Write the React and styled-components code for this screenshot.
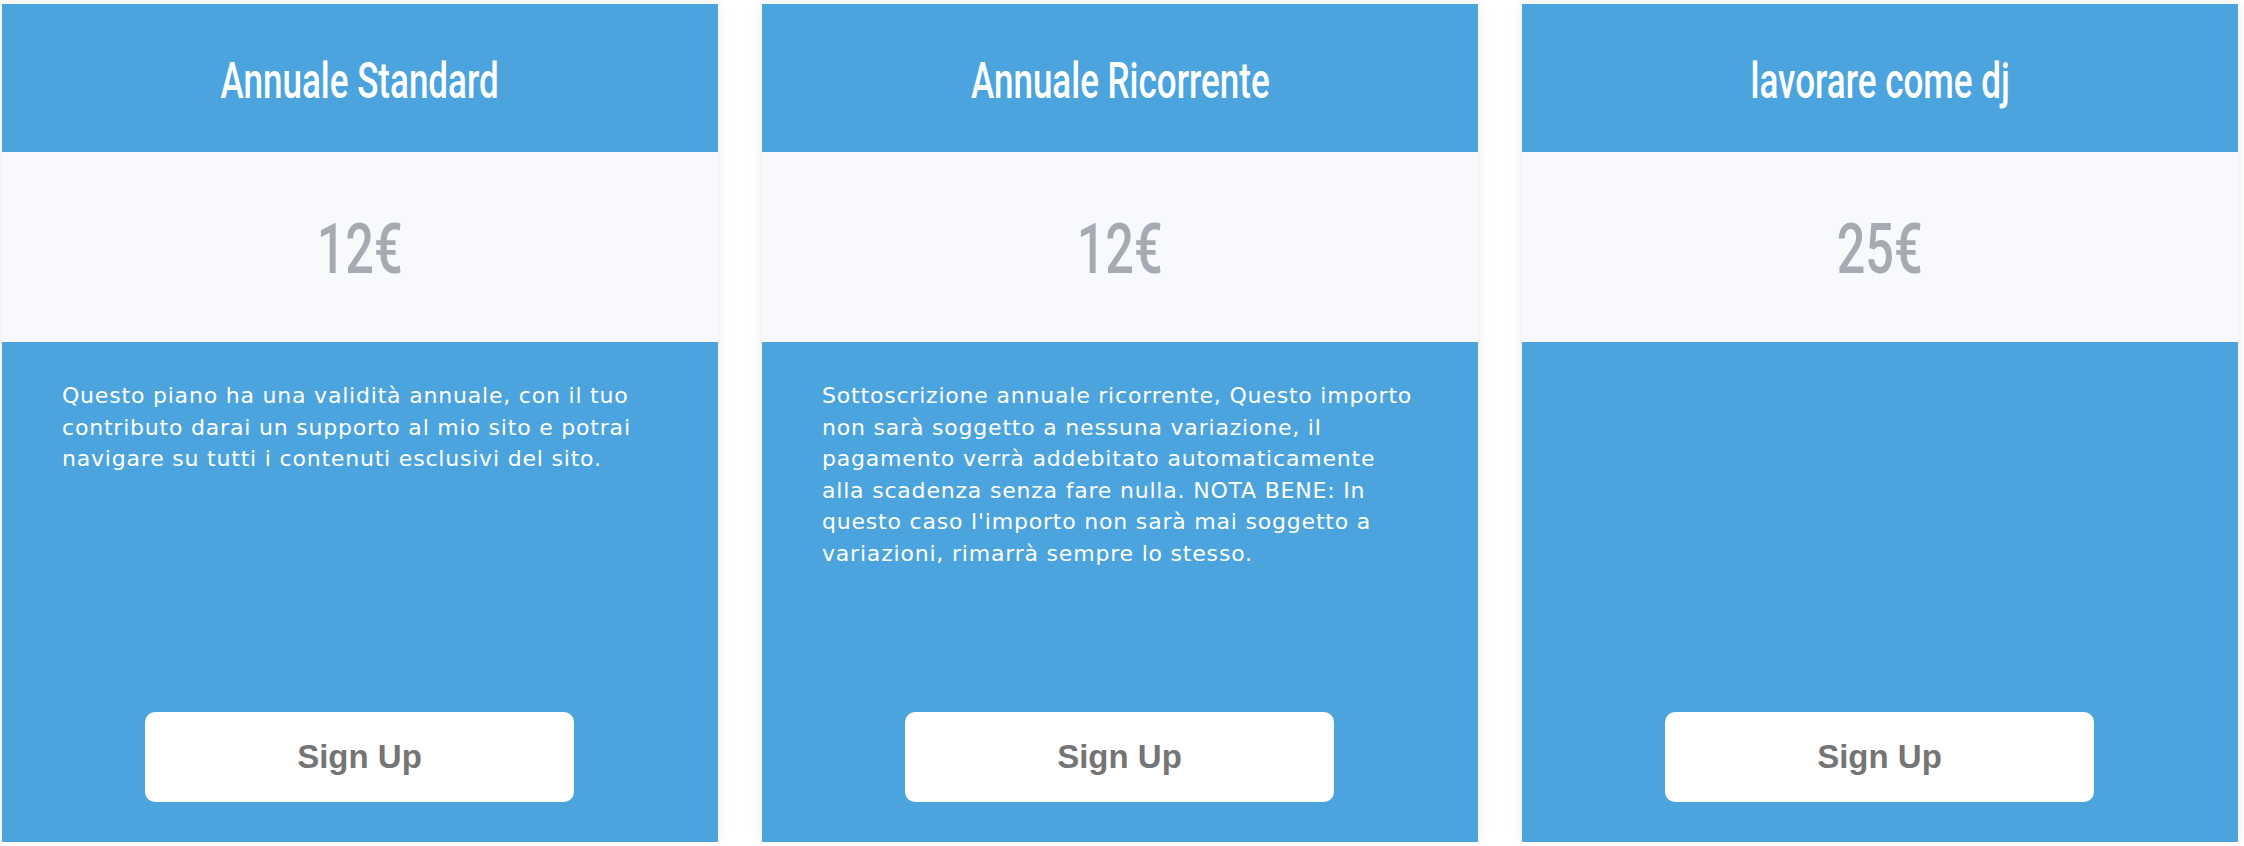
import React from "react";
import styled, { createGlobalStyle } from "styled-components";

const GlobalStyle = createGlobalStyle`
  html, body {
    margin: 0;
    padding: 0;
    background: #ffffff;
  }
  body {
    font-family: "DejaVu Sans", sans-serif;
  }
`;

const BLUE = "#4ca4de";

const Plans = styled.div`
  display: flex;
  gap: 44px;
  padding: 4px 0 0 2px;
`;

const Card = styled.article`
  width: 716px;
  height: 838px;
  display: flex;
  flex-direction: column;
  background: ${BLUE};
  box-shadow: 0 0 12px rgba(0, 0, 0, 0.09);
`;

const Header = styled.header`
  height: 148px;
  box-sizing: border-box;
  padding-top: 6px;
  display: flex;
  align-items: center;
  justify-content: center;
`;

/* narrow display face: Roboto squeezed horizontally */
const Title = styled.h2`
  display: inline-block;
  margin: 0;
  color: #ffffff;
  font-family: Roboto, "Liberation Sans", sans-serif;
  font-weight: 500;
  font-size: 50px;
  line-height: 1;
  white-space: nowrap;
  transform: scaleX(0.7);
  transform-origin: center;
`;

const PriceBand = styled.div`
  height: 190px;
  box-sizing: border-box;
  padding-top: 4px;
  display: flex;
  align-items: center;
  justify-content: center;
  background: #f7f9fc;
`;

const Price = styled.span`
  display: inline-block;
  color: #a5aab3;
  font-family: Roboto, "Liberation Sans", sans-serif;
  font-weight: 500;
  font-size: 70px;
  line-height: 1;
  transform: scaleX(0.72);
  transform-origin: center;
`;

const Body = styled.div`
  flex: 1;
  display: flex;
  flex-direction: column;
  padding: 38px 58px 40px 60px;
`;

const Description = styled.p`
  margin: 0;
  color: #ffffff;
  font-family: "DejaVu Sans", sans-serif;
  font-size: 22px;
  letter-spacing: 0.8px;
  line-height: 31.5px;
`;

const SignUp = styled.button`
  margin: auto 0 0 83px;
  width: 429px;
  height: 90px;
  border: none;
  border-radius: 10px;
  background: #ffffff;
  color: #757575;
  font-family: "Liberation Sans", Arial, sans-serif;
  font-weight: 700;
  font-size: 33px;
  cursor: pointer;
`;

const plans = [
  {
    title: "Annuale Standard",
    price: "12€",
    text: "Questo piano ha una validità annuale, con il tuo contributo darai un supporto al mio sito e potrai navigare su tutti i contenuti esclusivi del sito.",
  },
  {
    title: "Annuale Ricorrente",
    price: "12€",
    text: "Sottoscrizione annuale ricorrente, Questo importo non sarà soggetto a nessuna variazione, il pagamento verrà addebitato automaticamente alla scadenza senza fare nulla. NOTA BENE: In questo caso l'importo non sarà mai soggetto a variazioni, rimarrà sempre lo stesso.",
  },
  {
    title: "lavorare come dj",
    price: "25€",
    text: "",
  },
];

export default function App() {
  return (
    <>
      <GlobalStyle />
      <Plans>
        {plans.map((p) => (
          <Card key={p.title}>
            <Header>
              <Title>{p.title}</Title>
            </Header>
            <PriceBand>
              <Price>{p.price}</Price>
            </PriceBand>
            <Body>
              {p.text && <Description>{p.text}</Description>}
              <SignUp type="button">Sign Up</SignUp>
            </Body>
          </Card>
        ))}
      </Plans>
    </>
  );
}
